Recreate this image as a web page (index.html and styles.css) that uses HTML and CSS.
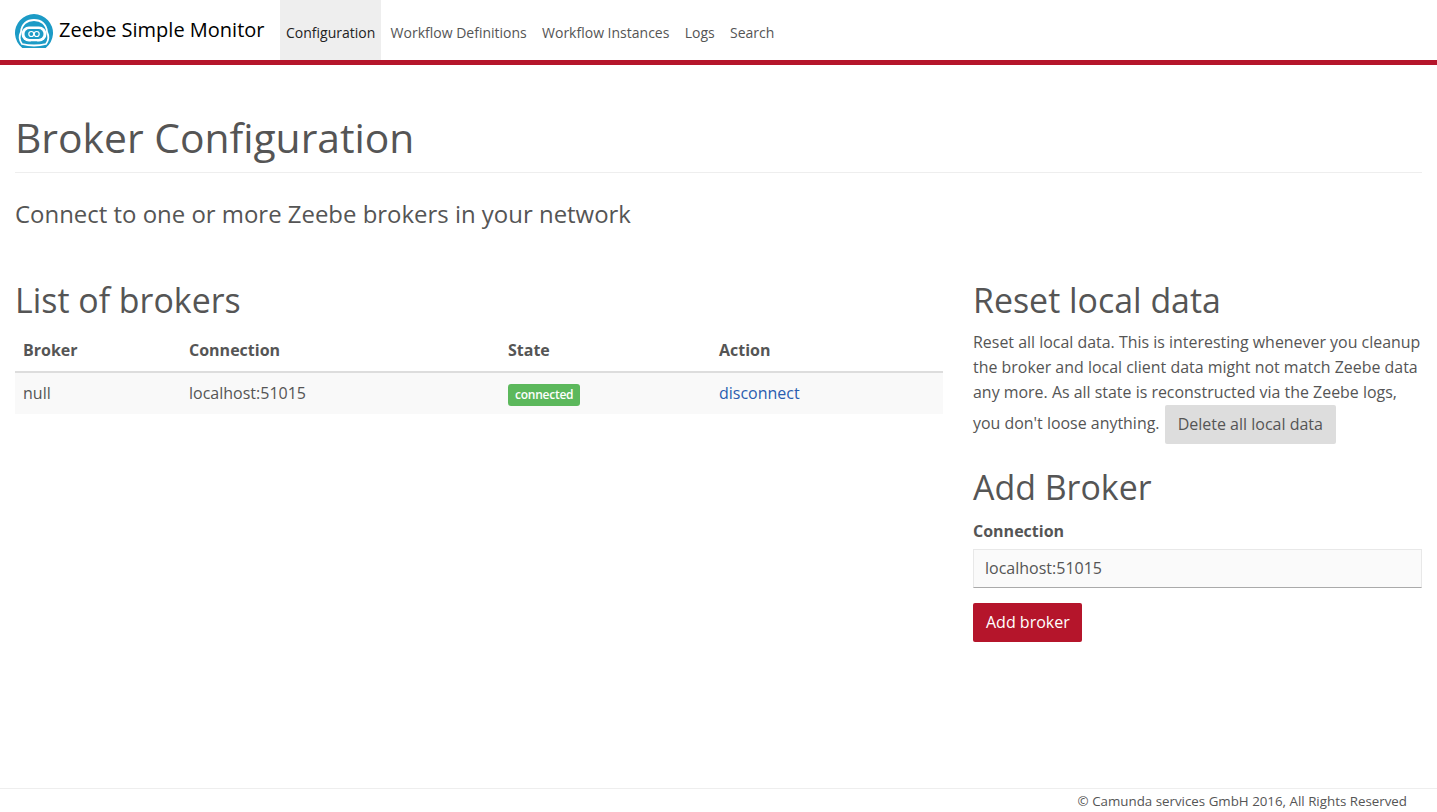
FILE: index.html
```html
<!DOCTYPE html>
<html lang="en">
<head>
<meta charset="utf-8">
<title>Zeebe Simple Monitor</title>
<link rel="stylesheet" href="styles.css">
</head>
<body>
<nav class="navbar">
  <a class="brand" href="#">
    <svg class="logo" viewBox="0 0 38 34" width="38" height="34" aria-hidden="true">
      <path d="M7.300 34 A19 19 0 1 1 30.700 34 Z" fill="#1c9bc6"/>
      <path d="M7 30 C4 26 4 22 6 18 C6.500 10 12 6 19 6 C26 6 31.500 10 32 18 C34 22 34 26 31 30 Q19 33 7 30Z" fill="none" stroke="#fff" stroke-width="1.800"/>
      <rect x="6.500" y="12.500" width="25" height="15" rx="7.500" fill="#fff"/>
      <rect x="9.500" y="15" width="19" height="10" rx="5" fill="#1c9bc6"/>
      <circle cx="16.300" cy="20" r="2.500" fill="none" stroke="#fff" stroke-width="1.200"/>
      <circle cx="21.700" cy="20" r="2.500" fill="none" stroke="#fff" stroke-width="1.200"/>
      <rect x="16" y="27.500" width="6" height="1.500" fill="#1c9bc6"/>
    </svg>
    <span>Zeebe Simple Monitor</span>
  </a>
  <ul class="nav">
    <li class="nav-item active"><a href="#">Configuration</a></li>
    <li class="nav-item"><a href="#">Workflow Definitions</a></li>
    <li class="nav-item"><a href="#">Workflow Instances</a></li>
    <li class="nav-item"><a href="#">Logs</a></li>
    <li class="nav-item"><a href="#">Search</a></li>
  </ul>
</nav>
<main class="content">
  <header class="page-header"><h1>Broker Configuration</h1></header>
  <p class="lead">Connect to one or more Zeebe brokers in your network</p>
  <div class="row">
    <section class="col-main">
      <h2>List of brokers</h2>
      <table class="table">
        <thead>
          <tr><th class="c1">Broker</th><th class="c2">Connection</th><th class="c3">State</th><th>Action</th></tr>
        </thead>
        <tbody>
          <tr><td>null</td><td>localhost:51015</td><td><span class="label">connected</span></td><td><a class="link" href="#">disconnect</a></td></tr>
        </tbody>
      </table>
    </section>
    <aside class="col-side">
      <h2>Reset local data</h2>
      <p class="reset-text">Reset all local data. This is interesting whenever you cleanup the broker and local client data might not match Zeebe data any more. As all state is reconstructed via the Zeebe logs, you don't loose anything. <button class="btn btn-default" type="button">Delete all local data</button></p>
      <h2 class="add-title">Add Broker</h2>
      <label class="field-label" for="conn">Connection</label>
      <input class="field" id="conn" type="text" value="localhost:51015">
      <button class="btn btn-primary" type="button">Add broker</button>
    </aside>
  </div>
</main>
<footer class="footer">© Camunda services GmbH 2016, All Rights Reserved</footer>
</body>
</html>
```
FILE: styles.css
```css
* { box-sizing: border-box; }
html, body { height: 100%; }
body {
  margin: 0;
  height: 812px;
  overflow: hidden;
  display: flex;
  flex-direction: column;
  font-family: "Open Sans", sans-serif;
  font-size: 16px;
  line-height: 25px;
  color: #555;
  background: #fff;
}
a { text-decoration: none; color: inherit; }

.navbar {
  display: flex;
  height: 65px;
  flex: none;
  border-bottom: 5px solid #b5152b;
  padding-left: 15px;
}
.brand {
  display: flex;
  align-items: center;
  gap: 6px;
  height: 60px;
  color: #000;
  font-size: 20px;
  margin-right: 15.500px;
}
.brand span { position: relative; top: -1px; }
.logo { display: block; flex: none; margin-top: 2px; }
.nav { display: flex; list-style: none; margin: 0; padding: 0; }
.nav-item a {
  display: flex;
  align-items: center;
  height: 60px;
  padding: 5px 6px 0;
  margin-right: 3.300px;
  font-size: 14px;
  color: #555;
}
.nav-item.active a { background: #eee; color: #222; }

.content { flex: 1; padding: 0 15px; min-height: 0; }
.page-header {
  margin-top: 44px;
  padding-bottom: 7px;
  border-bottom: 1px solid #eee;
}
h1 {
  margin: 0;
  font-size: 40.800px;
  font-weight: 400;
  line-height: 56px;
}
.lead {
  margin: 25px 0 0;
  font-size: 23.950px;
  line-height: 32px;
}
.row { display: flex; gap: 30px; margin-top: 48px; }
.col-main { flex: 0 0 928px; }
.col-side { flex: 1; min-width: 0; }
h2 {
  margin: 0;
  font-size: 33.900px;
  font-weight: 400;
  line-height: 44px;
}
.table { width: 100%; border-collapse: collapse; margin-top: 8px; }
.table th {
  text-align: left;
  font-weight: 700;
  padding: 8px;
  height: 41px;
  border-bottom: 2px solid #ddd;
}
.table td { padding: 8px; height: 41px; background: #f9f9f9; }
.c1 { width: 166px; }
.c2 { width: 319px; }
.c3 { width: 211px; }
.label {
  display: inline-block;
  background: #5cb85c;
  color: #fff;
  font-size: 12px;
  font-weight: 600;
  line-height: 12px;
  padding: 5px 7px 5px;
  border-radius: 3px;
  vertical-align: middle;
  letter-spacing: -0.250px;
}
.link { color: #2a5db0; }

.reset-text { margin: 8px 0 0; font-size: 15.950px; }
.btn {
  display: inline-block;
  height: 39px;
  border: 1px solid transparent;
  border-radius: 2px;
  font-family: inherit;
  font-size: 16px;
  padding: 0 12px 2px;
  vertical-align: middle;
}
.btn-default { background: #ddd; color: #555; margin-left: 1px; }
.btn-primary { background: #b5152b; color: #fff; display: block; margin-top: 15px; padding: 0 11px 2px 12px; }
.add-title { margin-top: 21px; }
.field-label { display: block; font-weight: 700; margin-top: 10px; }
.field {
  display: block;
  width: 100%;
  height: 39px;
  margin-top: 5px;
  padding: 0 11px 2px;
  font-family: inherit;
  font-size: 16px;
  color: #555;
  background: #fafafa;
  border: 1px solid #e8e8e8;
  border-bottom-color: #aaa;
}
.footer {
  flex: none;
  height: 24px;
  border-top: 1px solid #eee;
  text-align: right;
  padding-right: 30px;
  font-size: 13.330px;
  line-height: 25px;
}
```
